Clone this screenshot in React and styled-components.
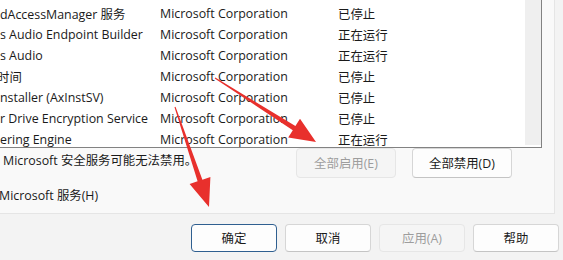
import React from 'react';
import styled, { createGlobalStyle } from 'styled-components';

// -- Data
const services = [
  { name: 'dAccessManager 服务', maker: 'Microsoft Corporation', status: '已停止' },
  { name: 's Audio Endpoint Builder', maker: 'Microsoft Corporation', status: '正在运行' },
  { name: 's Audio', maker: 'Microsoft Corporation', status: '正在运行' },
  { name: '时间', maker: 'Microsoft Corporation', status: '已停止', cut: 3 },
  { name: 'nstaller (AxInstSV)', maker: 'Microsoft Corporation', status: '已停止' },
  { name: 'r Drive Encryption Service', maker: 'Microsoft Corporation', status: '已停止' },
  { name: 'ering Engine', maker: 'Microsoft Corporation', status: '正在运行' },
];

const footerButtons = [
  { label: '确定', primary: true },
  { label: '取消' },
  { label: '应用(A)', disabled: true },
  { label: '帮助' },
];

// -- Component
function Arrows() {
  return (
    <ArrowLayer width="563" height="260" viewBox="0 0 563 260">
      <polygon
        points="215.3,77.6 295.4,126 300,118.8 316,142 288.2,137.4 292.8,130.2 214.7,78.4"
        fill="#e8302c"
      />
      <polygon
        points="174.5,107.2 197.6,181.3 189.6,184 209,207 210.4,177 202.4,179.7 175.5,106.8"
        fill="#e8302c"
      />
    </ArrowLayer>
  );
}

export default function App() {
  return (
    <>
      <GlobalStyle />
      <Page>
        <TabPanel>
          <ServiceList>
            <Rows>
              {services.map((s) => (
                <Row key={s.name}>
                  <NameCell cut={s.cut}>{s.name}</NameCell>
                  <span>{s.maker}</span>
                  <span>{s.status}</span>
                </Row>
              ))}
            </Rows>
            <Scrollbar />
          </ServiceList>
          <ActionRow>
            <Notice>Microsoft 安全服务可能无法禁用。</Notice>
            <Button disabled>全部启用(E)</Button>
            <Button>全部禁用(D)</Button>
          </ActionRow>
          <HideRow>Microsoft 服务(H)</HideRow>
        </TabPanel>
        <Footer>
          {footerButtons.map((b) => (
            <FooterButton key={b.label} primary={b.primary} disabled={b.disabled}>
              {b.label}
            </FooterButton>
          ))}
        </Footer>
        <Arrows />
      </Page>
    </>
  );
}

// -- Styles
const GlobalStyle = createGlobalStyle`
  body {
    margin: 0;
    background: #f3f3f3;
    font-family: "Open Sans", "Noto Sans CJK SC", sans-serif;
    font-size: 12.4px;
    color: #1a1a1a;
    overflow: hidden;
  }
`;

const Page = styled.div`
  position: relative;
  width: 563px;
  height: 260px;
  overflow: hidden;
`;

const TabPanel = styled.div`
  display: flex;
  flex-direction: column;
  box-sizing: border-box;
  width: 555px;
  height: 214px;
  background: #f9f9f9;
  border-right: 1px solid #e5e5e5;
  border-bottom: 1px solid #e5e5e5;
`;

const ServiceList = styled.div`
  display: flex;
  box-sizing: border-box;
  width: 542px;
  height: 148px;
  background: #ffffff;
  border-right: 1px solid #828282;
  border-bottom: 1px solid #828282;
  overflow: hidden;
`;

const Rows = styled.div`
  flex: 1;
  padding-top: 3px;
`;

const Row = styled.div`
  display: grid;
  grid-template-columns: 160px 178px 1fr;
  align-items: center;
  height: 21px;
  white-space: nowrap;
`;

const NameCell = styled.span`
  overflow: hidden;
  margin-left: ${({ cut }) => (cut ? -cut : 0)}px;
`;

const Scrollbar = styled.div`
  width: 16px;
  height: 145px;
  background: #efefef;
`;

const ActionRow = styled.div`
  display: flex;
  align-items: flex-start;
  gap: 16px;
  padding-right: 42px;
`;

const Notice = styled.div`
  flex: 1;
  padding: 5px 0 0 3px;
  line-height: 16px;
  white-space: nowrap;
`;

const Button = styled.button`
  width: 100px;
  height: 30px;
  box-sizing: border-box;
  border-radius: 4px;
  font: inherit;
  border: 1px solid ${({ disabled }) => (disabled ? '#e6e6e6' : '#d6d6d6')};
  border-bottom-color: ${({ disabled }) => (disabled ? '#e6e6e6' : '#c4c4c4')};
  background: ${({ disabled }) => (disabled ? '#f5f5f5' : '#fdfdfd')};
  color: ${({ disabled }) => (disabled ? '#9d9d9d' : '#1a1a1a')};
  padding: 0;
`;

const HideRow = styled.div`
  margin: 10px 0 0 -1px;
  line-height: 16px;
  white-space: nowrap;
`;

const Footer = styled.div`
  display: flex;
  justify-content: flex-end;
  gap: 8px;
  padding: 10px 4px 0 0;
`;

const FooterButton = styled(Button)`
  width: 86px;
  height: 28px;
  ${({ primary }) =>
    primary &&
    `
    border: 1px solid #2f5f90;
    border-bottom-color: #2f5f90;
    background: #fdfdfd;
  `}
`;

const ArrowLayer = styled.svg`
  position: absolute;
  left: 0;
  top: 0;
  pointer-events: none;
`;
